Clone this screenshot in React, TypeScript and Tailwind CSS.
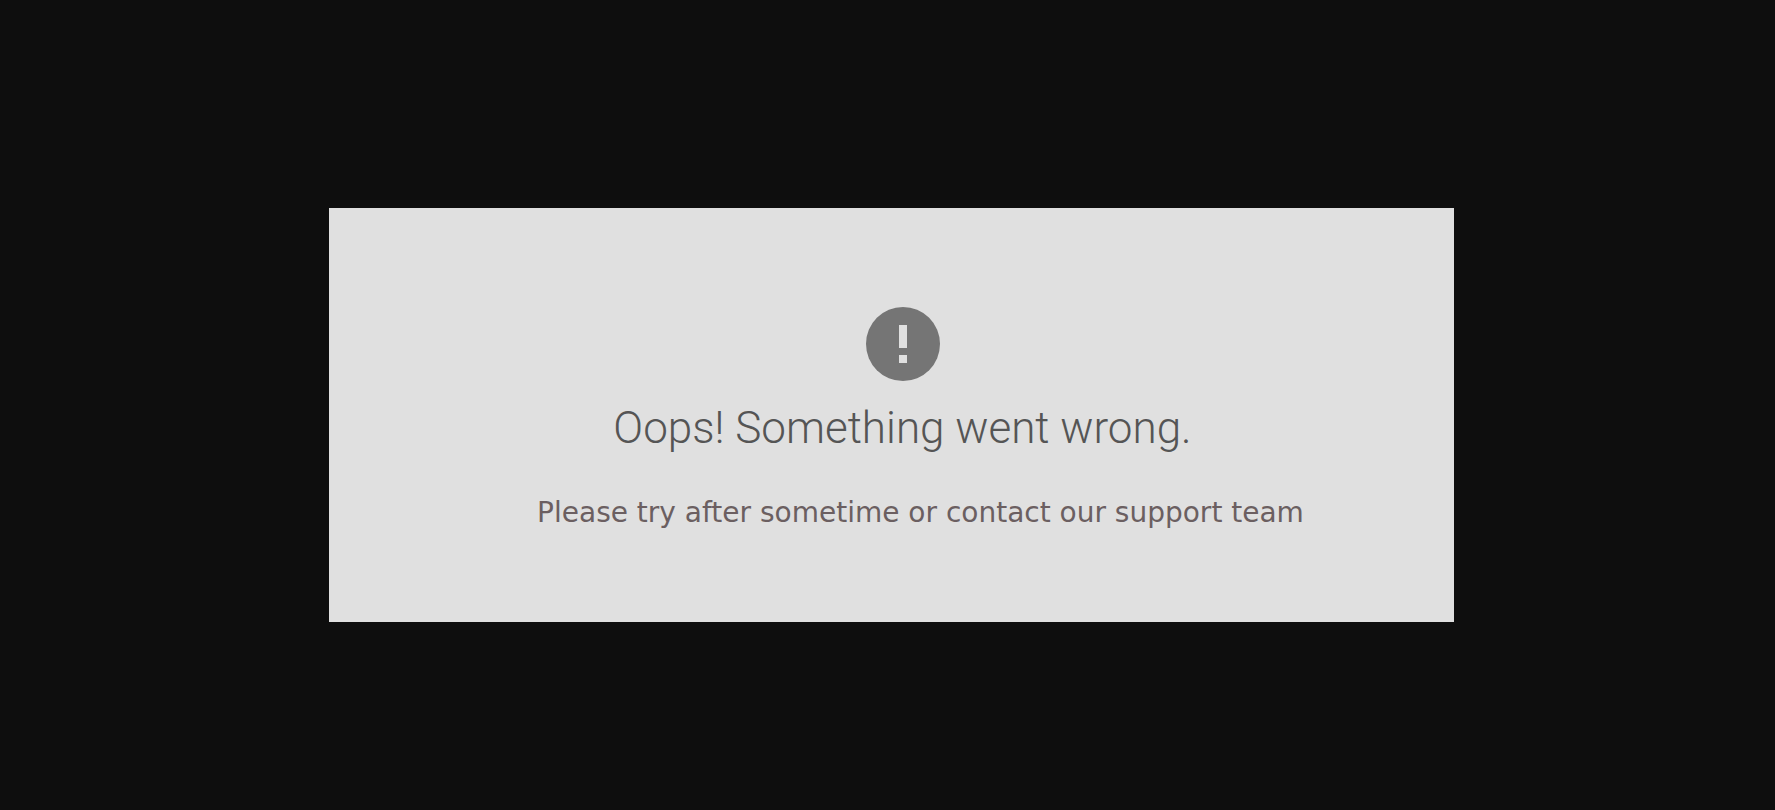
export default function App() {
  return (
    <div className="min-h-screen bg-[#0e0e0e] pt-52 pr-4 pb-16 pl-6">
      <main className="mx-auto flex w-full max-w-[1125px] flex-col items-center bg-[#e0e0e0] pt-[99px] pb-[93px] pl-[22px] text-center">
        <ErrorIcon />
        <h1 className="mt-[21px] font-['Roboto',sans-serif] text-[44px] leading-[52px] font-light text-[#555555]">
          Oops! Something went wrong.
        </h1>
        <p className="mt-[43px] pl-9 font-['DejaVu_Sans',Verdana,sans-serif] text-[28px] leading-8 text-[#6b5f61]">
          Please try after sometime or contact our support team
        </p>
      </main>
    </div>
  );
}

function ErrorIcon() {
  return (
    <svg viewBox="0 0 74 74" className="h-[74px] w-[74px]" aria-hidden="true">
      <circle cx="37" cy="37" r="37" fill="#757575" />
      <path fill="#e0e0e0" d="M33 18h8v23h-8zM33 48h8v8h-8z" />
    </svg>
  );
}
